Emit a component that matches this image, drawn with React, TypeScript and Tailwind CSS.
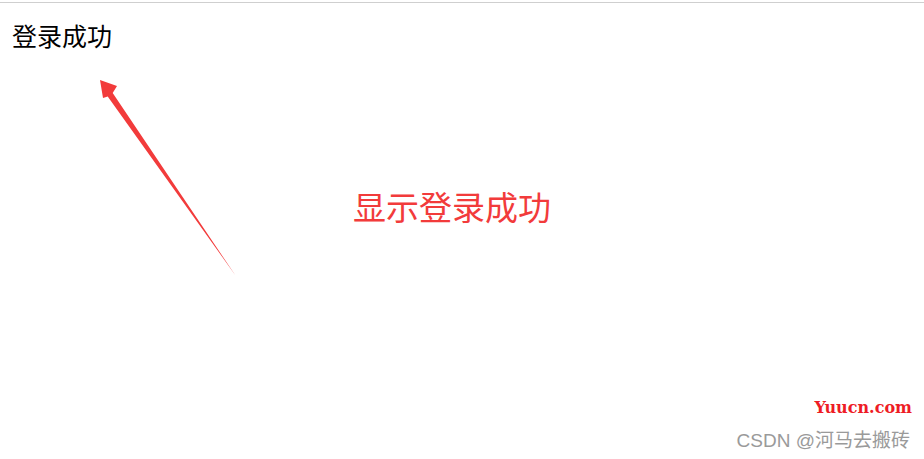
import React from 'react';

const cjk = { fontFamily: '"Microsoft YaHei", "Noto Sans CJK SC", sans-serif' };

const Arrow: React.FC = () => (
  <svg className="absolute left-0 top-0" width="260" height="290" viewBox="0 0 260 290">
    <polygon
      points="100,80 117,86 112.7,93.1 235.5,275.5 107.7,96.5 103,98"
      fill="#f23b3b"
    />
  </svg>
);

const App: React.FC = () => {
  return (
    <div className="relative h-[459px] w-full overflow-hidden bg-white">
      {/* top border of the browser viewport */}
      <div className="mt-[2px] h-px w-full bg-[#cfcfcf]" />

      <div className="px-[12px] pt-[16px]">
        <p className="text-[25px] leading-[32px] text-black" style={cjk}>
          登录成功
        </p>
      </div>

      <Arrow />

      <p
        className="absolute left-[353px] top-[184px] text-[33px] leading-[44px] text-[#f23b3b]"
        style={cjk}
      >
        显示登录成功
      </p>

      {/* watermarks */}
      <div className="absolute bottom-[6px] right-[14px] flex flex-col items-end gap-[10px]">
        <span
          className="mr-[-2px] text-[16px] font-bold leading-[22px] text-[#ee1c25]"
          style={{ fontFamily: '"DejaVu Serif", serif' }}
        >
          Yuucn.com
        </span>
        <span
          className="text-[19px] leading-[24px] text-[#9a9a9a]"
          style={{ fontFamily: '"Liberation Sans", "Noto Sans CJK SC", sans-serif' }}
        >
          CSDN @河马去搬砖
        </span>
      </div>
    </div>
  );
};

export default App;
